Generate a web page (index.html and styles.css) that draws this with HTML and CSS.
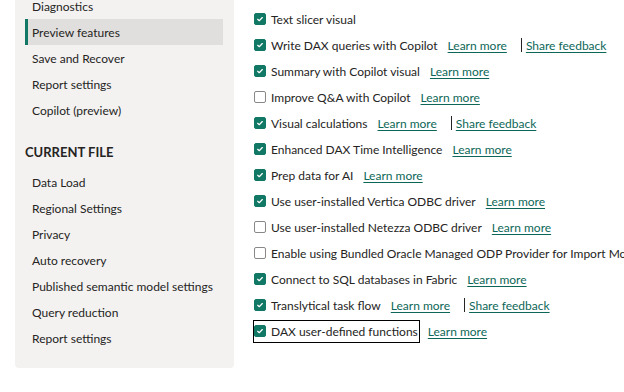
FILE: index.html
```html
<!DOCTYPE html>
<html>
<head>
<meta charset="utf-8">
<link rel="stylesheet" href="styles.css">
</head>
<body>
<div class="page">
  <nav class="sidebar">
    <ul class="nav-list">
      <li class="nav-item">Diagnostics</li>
      <li class="nav-item selected">Preview features</li>
      <li class="nav-item">Save and Recover</li>
      <li class="nav-item">Report settings</li>
      <li class="nav-item">Copilot (preview)</li>
    </ul>
    <div class="nav-heading">CURRENT FILE</div>
    <ul class="nav-list">
      <li class="nav-item">Data Load</li>
      <li class="nav-item">Regional Settings</li>
      <li class="nav-item">Privacy</li>
      <li class="nav-item">Auto recovery</li>
      <li class="nav-item">Published semantic model settings</li>
      <li class="nav-item">Query reduction</li>
      <li class="nav-item">Report settings</li>
    </ul>
  </nav>
  <main class="content">
    <div class="row">
      <label class="opt"><span class="box checked"><svg viewBox="0 0 12 12"><polyline points="3.2,6.3 5.1,8.1 8.8,4.2"/></svg></span><span class="label">Text slicer visual</span></label>
    </div>
    <div class="row">
      <label class="opt"><span class="box checked"><svg viewBox="0 0 12 12"><polyline points="3.2,6.3 5.1,8.1 8.8,4.2"/></svg></span><span class="label">Write DAX queries with Copilot</span></label>
      <a class="link">Learn more</a><span class="sep"></span><a class="link share">Share feedback</a>
    </div>
    <div class="row">
      <label class="opt"><span class="box checked"><svg viewBox="0 0 12 12"><polyline points="3.2,6.3 5.1,8.1 8.8,4.2"/></svg></span><span class="label">Summary with Copilot visual</span></label>
      <a class="link">Learn more</a>
    </div>
    <div class="row">
      <label class="opt"><span class="box"></span><span class="label">Improve Q&amp;A with Copilot</span></label>
      <a class="link">Learn more</a>
    </div>
    <div class="row">
      <label class="opt"><span class="box checked"><svg viewBox="0 0 12 12"><polyline points="3.2,6.3 5.1,8.1 8.8,4.2"/></svg></span><span class="label">Visual calculations</span></label>
      <a class="link">Learn more</a><span class="sep"></span><a class="link share">Share feedback</a>
    </div>
    <div class="row">
      <label class="opt"><span class="box checked"><svg viewBox="0 0 12 12"><polyline points="3.2,6.3 5.1,8.1 8.8,4.2"/></svg></span><span class="label">Enhanced DAX Time Intelligence</span></label>
      <a class="link">Learn more</a>
    </div>
    <div class="row">
      <label class="opt"><span class="box checked"><svg viewBox="0 0 12 12"><polyline points="3.2,6.3 5.1,8.1 8.8,4.2"/></svg></span><span class="label">Prep data for AI</span></label>
      <a class="link">Learn more</a>
    </div>
    <div class="row">
      <label class="opt"><span class="box checked"><svg viewBox="0 0 12 12"><polyline points="3.2,6.3 5.1,8.1 8.8,4.2"/></svg></span><span class="label">Use user-installed Vertica ODBC driver</span></label>
      <a class="link">Learn more</a>
    </div>
    <div class="row">
      <label class="opt"><span class="box"></span><span class="label">Use user-installed Netezza ODBC driver</span></label>
      <a class="link">Learn more</a>
    </div>
    <div class="row">
      <label class="opt"><span class="box"></span><span class="label">Enable using Bundled Oracle Managed ODP Provider for Import Mode</span></label>
    </div>
    <div class="row">
      <label class="opt"><span class="box checked"><svg viewBox="0 0 12 12"><polyline points="3.2,6.3 5.1,8.1 8.8,4.2"/></svg></span><span class="label">Connect to SQL databases in Fabric</span></label>
      <a class="link">Learn more</a>
    </div>
    <div class="row">
      <label class="opt"><span class="box checked"><svg viewBox="0 0 12 12"><polyline points="3.2,6.3 5.1,8.1 8.8,4.2"/></svg></span><span class="label">Translytical task flow</span></label>
      <a class="link">Learn more</a><span class="sep"></span><a class="link share">Share feedback</a>
    </div>
    <div class="row">
      <label class="opt focused"><span class="box checked"><svg viewBox="0 0 12 12"><polyline points="3.2,6.3 5.1,8.1 8.8,4.2"/></svg></span><span class="label">DAX user-defined functions</span></label>
      <a class="link">Learn more</a>
    </div>
  </main>
</div>
</body>
</html>
```
FILE: styles.css
```css
html, body {
  margin: 0;
  padding: 0;
  background: #ffffff;
}
body {
  width: 624px;
  height: 392px;
  overflow: hidden;
  font-family: Lato, "Open Sans", sans-serif;
  font-size: 12px;
  color: #252423;
}
.page {
  display: flex;
  align-items: flex-start;
}
.sidebar {
  flex: 0 0 219px;
  margin-left: 15px;
  background: #f3f2f1;
  border-radius: 0 0 4px 4px;
  padding: 0 11px 17px 10px;
  box-sizing: border-box;
}
.nav-list {
  list-style: none;
  margin: 0;
  padding: 0;
}
.nav-list:first-child {
  margin-top: -7px;
}
.nav-item {
  height: 24px;
  line-height: 24px;
  padding: 2px 0 0 4px;
  border-left: 3px solid transparent;
  white-space: nowrap;
}
.nav-item.selected {
  background: #e1dfdd;
  border-left-color: #117865;
}
.nav-heading {
  margin: 20px 0 8px;
  height: 18px;
  line-height: 18px;
  font-size: 13px;
  font-weight: 700;
}
.content {
  flex: 1;
  padding: 6px 0 0 19px;
  min-width: 0;
}
.row {
  display: flex;
  align-items: center;
  height: 26px;
  white-space: nowrap;
}
.opt {
  display: flex;
  align-items: center;
  height: 21px;
  border: 1px solid transparent;
  padding-right: 1px;
}
.opt.focused {
  border-color: #000000;
}
.box {
  width: 12px;
  height: 12px;
  box-sizing: border-box;
  border: 1px solid #8a8886;
  border-radius: 2px;
  background: #ffffff;
  margin-right: 5px;
  flex: 0 0 12px;
  display: flex;
}
.box.checked {
  background: #117865;
  border-color: #117865;
}
.box svg {
  width: 10px;
  height: 10px;
}
.box svg polyline {
  fill: none;
  stroke: #ffffff;
  stroke-width: 1.4;
  stroke-linecap: round;
  stroke-linejoin: round;
}
.label {
  line-height: 21px;
}
.link {
  margin-left: 8px;
  color: #0d6758;
  text-decoration: underline;
  text-underline-offset: 2px;
  cursor: pointer;
}
.sep {
  display: inline-block;
  width: 1px;
  height: 14px;
  background: #252423;
  margin-left: 14px;
}
.link.share {
  margin-left: 4px;
}
```
